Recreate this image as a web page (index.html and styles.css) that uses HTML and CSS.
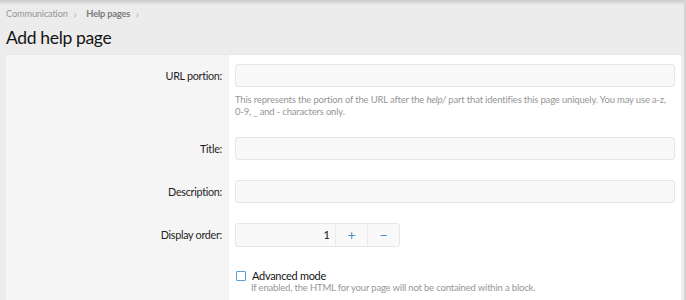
FILE: index.html
```html
<!DOCTYPE html>
<html>
<head>
<meta charset="utf-8">
<link rel="stylesheet" href="styles.css">
</head>
<body>
<div class="page">
  <div class="topshade"></div>
  <nav class="crumbs">
    <span class="crumb">Communication</span><span class="sep">›</span><span class="crumb strong">Help pages</span><span class="sep">›</span>
  </nav>
  <h1 class="title">Add help page</h1>
  <div class="panel">
    <div class="row row-url">
      <div class="label">URL portion:</div>
      <div class="field">
        <div class="input"></div>
        <div class="hint">This represents the portion of the URL after the <i>help/</i> part that identifies this page uniquely. You may use a-z, 0-9, _ and - characters only.</div>
      </div>
    </div>
    <div class="row">
      <div class="label">Title:</div>
      <div class="field"><div class="input"></div></div>
    </div>
    <div class="row">
      <div class="label">Description:</div>
      <div class="field"><div class="input"></div></div>
    </div>
    <div class="row">
      <div class="label">Display order:</div>
      <div class="field">
        <div class="spinner">
          <div class="num">1</div>
          <div class="btn plus">+</div>
          <div class="btn minus">−</div>
        </div>
      </div>
    </div>
    <div class="row row-check">
      <div class="label"></div>
      <div class="field">
        <div class="check"><span class="box"></span><span class="check-label">Advanced mode</span></div>
        <div class="hint hint-check">If enabled, the HTML for your page will not be contained within a block.</div>
      </div>
    </div>
  </div>
</div>
</body>
</html>
```
FILE: styles.css
```css
html, body {
  margin: 0;
  padding: 0;
  height: 100%;
  overflow: hidden;
}
body {
  background: #ececec;
  font-family: "Lato", "Open Sans", sans-serif;
  color: #141414;
}
.page {
  position: relative;
  height: 300px;
  box-sizing: border-box;
  border-right: 2px solid #d4d4d4;
  padding: 0 3px 0 6px;
}
.topshade {
  position: absolute;
  left: 0; right: 0; top: 0;
  height: 5px;
  background: linear-gradient(#c9c9c9, rgba(236,236,236,0));
}
.crumbs {
  padding-top: 6px;
  height: 16px;
  font-size: 9.3px;
  letter-spacing: -0.2px;
  line-height: 16px;
  color: #969696;
  display: flex;
  align-items: center;
}
.crumb.strong { font-weight: bold; color: #7a7a7a; }
.sep { margin: 0 10px 0 6px; font-size: 10px; }
.title {
  margin: 2px 0 0 0;
  font-weight: normal;
  font-size: 17.5px;
  letter-spacing: -0.35px;
  line-height: 28px;
  height: 30px;
  color: #141414;
}
.panel {
  display: grid;
  grid-template-columns: 223px 1fr;
  background: linear-gradient(to right, #f5f5f5 223px, #fff 223px);
  border-top: 1px solid #e8e8e8;
  padding-top: 9px;
}
.row {
  display: contents;
}
.label {
  font-size: 10.8px;
  letter-spacing: -0.3px;
  text-align: right;
  padding-right: 7px;
  height: 23px;
  line-height: 23px;
  color: #1e1e1e;
}
.field {
  padding: 0 6px 0 6px;
}
.input {
  height: 21px;
  border: 1px solid #e6e6e6;
  border-radius: 3px;
  background: #f9f9f9;
  margin-bottom: 20px;
}
.row-url .input { margin-bottom: 7px; }
.hint {
  font-size: 9.5px;
  letter-spacing: -0.18px;
  line-height: 12px;
  color: #969696;
  margin-bottom: 19px;
}
.spinner {
  display: flex;
  width: 165px;
  height: 24px;
  border: 1px solid #e6e6e6;
  border-radius: 3px;
  background: #f9f9f9;
  box-sizing: border-box;
  margin-bottom: 22px;
}
.num {
  flex: 1;
  text-align: right;
  padding-right: 5px;
  font-size: 11px;
  line-height: 22px;
  border-right: 1px solid #ebebeb;
}
.btn {
  width: 31px;
  text-align: center;
  line-height: 22px;
  color: #4a90c8;
  font-size: 14px;
}
.btn.plus { border-right: 1px solid #ebebeb; }
.check {
  display: flex;
  align-items: center;
  height: 13px;
}
.box {
  width: 8px;
  height: 8px;
  border: 1px solid #5d9fd0;
  border-radius: 1px;
  margin-left: 1px;
  margin-right: 6px;
}
.check-label {
  font-size: 11px;
  letter-spacing: -0.3px;
  color: #141414;
}
.hint-check { margin-top: 0; margin-left: 16px; }
```
